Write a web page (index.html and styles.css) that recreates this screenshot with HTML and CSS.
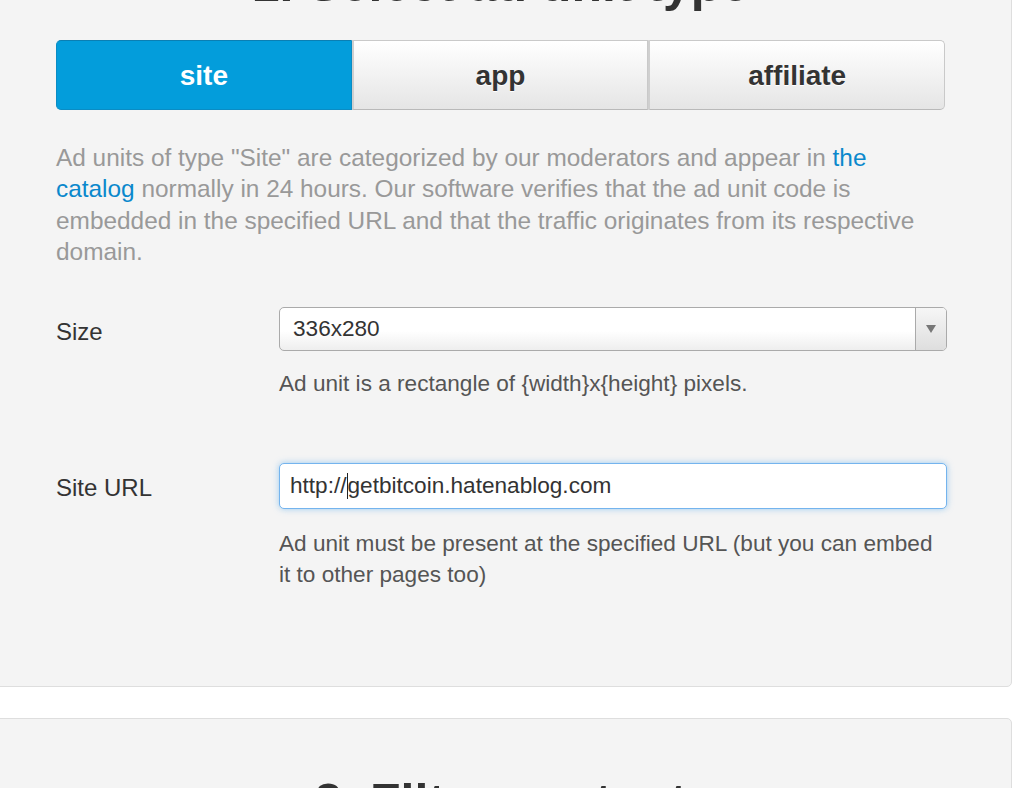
FILE: index.html
```html
<!DOCTYPE html>
<html lang="en">
<head>
<meta charset="utf-8">
<title>Create ad unit</title>
<link rel="stylesheet" href="styles.css">
</head>
<body>
<div class="card card-type">
  <h2 class="card-title">1. Select ad unit type</h2>
  <div class="seg">
    <span class="seg-btn seg-active">site</span>
    <span class="seg-btn">app</span>
    <span class="seg-btn seg-last">affiliate</span>
  </div>
  <p class="desc">Ad units of type "Site" are categorized by our moderators and appear in <a class="link" href="#">the catalog</a> normally in 24 hours. Our software verifies that the ad unit code is embedded in the specified URL and that the traffic originates from its respective domain.</p>
  <div class="row row-size">
    <div class="label">Size</div>
    <div class="ctrl">
      <div class="select"><span class="select-val">336x280</span><span class="select-arrow"><span class="tri"></span></span></div>
      <div class="help">Ad unit is a rectangle of {width}x{height} pixels.</div>
    </div>
  </div>
  <div class="row row-url">
    <div class="label">Site URL</div>
    <div class="ctrl">
      <div class="input">http://<span class="caret"></span>getbitcoin.hatenablog.com</div>
      <div class="help">Ad unit must be present at the specified URL (but you can embed it to other pages too)</div>
    </div>
  </div>
</div>
<div class="card card-filter">
  <h2 class="card-title">2. Filter content</h2>
</div>
</body>
</html>
```
FILE: styles.css
```css
html, body {
  margin: 0;
  padding: 0;
  background: #ffffff;
  overflow: hidden;
}
body {
  font-family: "Liberation Sans", Arial, Helvetica, sans-serif;
  color: #333;
  height: 788px;
}
.card {
  background: #f4f4f4;
  border: 1px solid #dedede;
  border-radius: 5px;
  margin-left: -11px;
  width: 1023px;
  box-sizing: border-box;
  padding: 0 66px;
}
.card-type {
  margin-top: -45px;
  padding-bottom: 96px;
}
.card-title {
  margin: 0;
  font-size: 50px;
  line-height: 56px;
  font-weight: bold;
  text-align: center;
  color: #333;
}
.seg {
  display: flex;
  margin-top: 28px;
  height: 70px;
}
.seg-btn {
  flex: 1;
  display: flex;
  align-items: center;
  justify-content: center;
  padding-top: 1px;
  font-size: 28px;
  font-weight: bold;
  color: #333;
  text-shadow: 0 1px 0 #fff;
  background: linear-gradient(#ffffff, #e5e5e5);
  border: 1px solid #c9c9c9;
  border-bottom-color: #b9b9b9;
  border-left: 2px solid #cfcfcf;
  box-sizing: border-box;
}
.seg-active {
  background: #039ddb;
  color: #fff;
  text-shadow: none;
  border: 1px solid #0a8cc4;
  border-top-color: #0a7fb3;
  border-radius: 5px 0 0 5px;
}
.seg-last {
  border-radius: 0 5px 5px 0;
  border-right: 1px solid #c9c9c9;
}
.desc {
  margin: 32px 0 0;
  font-size: 24.4px;
  line-height: 31.3px;
  color: #999;
}
.link {
  color: #0a88cc;
  text-decoration: none;
}
.row {
  display: flex;
  align-items: flex-start;
}
.row-size {
  margin-top: 40px;
}
.row-url {
  margin-top: 64px;
}
.label {
  width: 223px;
  flex: none;
  padding-top: 2px;
  font-size: 24px;
  line-height: 46px;
  color: #333;
}
.ctrl {
  flex: 1;
  margin-right: -2px;
}
.select {
  display: flex;
  height: 44px;
  box-sizing: border-box;
  border: 1px solid #aaa;
  border-radius: 5px;
  background: linear-gradient(#ffffff 55%, #eeeeee);
  font-size: 22.6px;
  color: #333;
  align-items: center;
}
.select-val {
  flex: 1;
  padding-left: 13px;
}
.select-arrow {
  width: 30px;
  height: 100%;
  border-left: 1px solid #aaa;
  display: flex;
  align-items: center;
  justify-content: center;
  background: linear-gradient(#f6f6f6, #dedede);
  border-radius: 0 4px 4px 0;
}
.tri {
  width: 0;
  height: 0;
  border-left: 5px solid transparent;
  border-right: 5px solid transparent;
  border-top: 8px solid #777;
}
.help {
  margin-top: 17px;
  font-size: 22.6px;
  line-height: 31px;
  color: #555;
}
.row-url .help {
  margin-top: 19px;
}
.input {
  height: 46px;
  box-sizing: border-box;
  border: 1px solid #74b4ee;
  border-radius: 5px;
  box-shadow: 0 0 6px rgba(82, 168, 236, 0.55);
  background: #fff;
  font-size: 22.6px;
  line-height: 44px;
  padding-left: 10px;
  color: #333;
}
.caret {
  display: inline-block;
  width: 1px;
  height: 26px;
  background: #222;
  vertical-align: -6px;
}
.card-filter {
  margin-top: 31px;
  padding-top: 55px;
  height: 200px;
}
```
